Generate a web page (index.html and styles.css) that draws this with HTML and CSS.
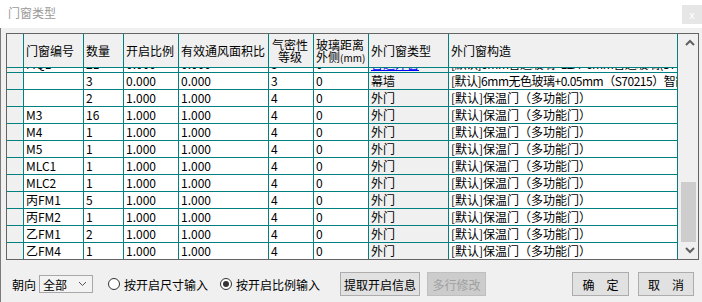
FILE: index.html
```html
<!DOCTYPE html>
<html>
<head>
<meta charset="utf-8">
<link rel="stylesheet" href="styles.css">
</head>
<body>
<div class="window">
  <div class="titlebar">
    <span class="title">门窗类型</span>
    <span class="close">x</span>
  </div>
  <div class="main">
    <div class="grid">
      <div class="table">
        <div class="row head">
          <div class="c c0"></div>
          <div class="c">门窗编号</div>
          <div class="c">数量</div>
          <div class="c">开启比例</div>
          <div class="c">有效通风面积比</div>
          <div class="c two center">气密性<br>等级</div>
          <div class="c two">玻璃距离<br>外侧<span class="mm">(mm)</span></div>
          <div class="c">外门窗类型</div>
          <div class="c">外门窗构造</div>
        </div>
        <div class="body">
          <div class="rows">
            <div class="row">
              <div class="c c0"></div><div class="c">MQ1</div><div class="c">21</div><div class="c">0.000</div><div class="c">0.000</div><div class="c">3</div><div class="c">0</div><div class="c c7"><span class="link">普通外窗</span></div><div class="c tight">[默认]6mm普通玻璃+12A+6mm普通玻璃(S70215)</div>
            </div>
            <div class="row">
              <div class="c c0"></div><div class="c"></div><div class="c">3</div><div class="c">0.000</div><div class="c">0.000</div><div class="c">3</div><div class="c">0</div><div class="c c7">幕墙</div><div class="c tight">[默认]6mm无色玻璃+0.05mm（S70215）智能玻璃</div>
            </div>
            <div class="row">
              <div class="c c0"></div><div class="c"></div><div class="c">2</div><div class="c">1.000</div><div class="c">1.000</div><div class="c">4</div><div class="c">0</div><div class="c c7">外门</div><div class="c">[默认]保温门（多功能门）</div>
            </div>
            <div class="row">
              <div class="c c0"></div><div class="c">M3</div><div class="c">16</div><div class="c">1.000</div><div class="c">1.000</div><div class="c">4</div><div class="c">0</div><div class="c c7">外门</div><div class="c">[默认]保温门（多功能门）</div>
            </div>
            <div class="row">
              <div class="c c0"></div><div class="c">M4</div><div class="c">1</div><div class="c">1.000</div><div class="c">1.000</div><div class="c">4</div><div class="c">0</div><div class="c c7">外门</div><div class="c">[默认]保温门（多功能门）</div>
            </div>
            <div class="row">
              <div class="c c0"></div><div class="c">M5</div><div class="c">1</div><div class="c">1.000</div><div class="c">1.000</div><div class="c">4</div><div class="c">0</div><div class="c c7">外门</div><div class="c">[默认]保温门（多功能门）</div>
            </div>
            <div class="row">
              <div class="c c0"></div><div class="c">MLC1</div><div class="c">1</div><div class="c">1.000</div><div class="c">1.000</div><div class="c">4</div><div class="c">0</div><div class="c c7">外门</div><div class="c">[默认]保温门（多功能门）</div>
            </div>
            <div class="row">
              <div class="c c0"></div><div class="c">MLC2</div><div class="c">1</div><div class="c">1.000</div><div class="c">1.000</div><div class="c">4</div><div class="c">0</div><div class="c c7">外门</div><div class="c">[默认]保温门（多功能门）</div>
            </div>
            <div class="row">
              <div class="c c0"></div><div class="c">丙FM1</div><div class="c">5</div><div class="c">1.000</div><div class="c">1.000</div><div class="c">4</div><div class="c">0</div><div class="c c7">外门</div><div class="c">[默认]保温门（多功能门）</div>
            </div>
            <div class="row">
              <div class="c c0"></div><div class="c">丙FM2</div><div class="c">1</div><div class="c">1.000</div><div class="c">1.000</div><div class="c">4</div><div class="c">0</div><div class="c c7">外门</div><div class="c">[默认]保温门（多功能门）</div>
            </div>
            <div class="row">
              <div class="c c0"></div><div class="c">乙FM1</div><div class="c">2</div><div class="c">1.000</div><div class="c">1.000</div><div class="c">4</div><div class="c">0</div><div class="c c7">外门</div><div class="c">[默认]保温门（多功能门）</div>
            </div>
            <div class="row">
              <div class="c c0"></div><div class="c">乙FM4</div><div class="c">1</div><div class="c">1.000</div><div class="c">1.000</div><div class="c">4</div><div class="c">0</div><div class="c c7">外门</div><div class="c">[默认]保温门（多功能门）</div>
            </div>
          </div>
        </div>
      </div>
      <div class="vscroll">
        <div class="arrow"><svg width="10" height="7" viewBox="0 0 10 7"><path d="M1 6 L5 2 L9 6" fill="none" stroke="#606060" stroke-width="2"/></svg></div>
        <div class="track"><div class="thumb"></div></div>
        <div class="arrow"><svg width="10" height="7" viewBox="0 0 10 7"><path d="M1 1 L5 5 L9 1" fill="none" stroke="#606060" stroke-width="2"/></svg></div>
      </div>
    </div>
    <div class="toolbar">
      <span class="label">朝向</span>
      <div class="select"><span>全部</span><svg width="9" height="6" viewBox="0 0 9 6"><path d="M1 1 L4.5 4.5 L8 1" fill="none" stroke="#555" stroke-width="1"/></svg></div>
      <label class="radio r1"><span class="dot"></span>按开启尺寸输入</label>
      <label class="radio r2"><span class="dot on"></span>按开启比例输入</label>
      <button class="btn b1">提取开启信息</button>
      <button class="btn b2 disabled">多行修改</button>
      <button class="btn ok"><span>确</span><span>定</span></button>
      <button class="btn cancel"><span>取</span><span>消</span></button>
    </div>
  </div>
</div>
</body>
</html>
```

FILE: styles.css
```css
* { box-sizing: border-box; }
html, body { margin: 0; padding: 0; }
body {
  width: 702px;
  height: 302px;
  overflow: hidden;
  background: #f0f0f0;
  font-family: "Noto Sans CJK SC", "Liberation Sans", sans-serif;
  font-size: 12px;
  color: #000;
}
.window { width: 702px; height: 302px; display: flex; flex-direction: column; }
.titlebar {
  height: 28px;
  background: #fff;
  display: flex;
  justify-content: space-between;
  align-items: flex-start;
}
.title { color: #9a9a9a; font-size: 12px; line-height: 14px; padding: 6px 0 0 8px; }
.close {
  width: 20px; height: 19px; margin-top: 5px;
  background: #e6e6e6; color: #fff;
  font-family: "Liberation Sans", sans-serif; font-size: 11px;
  display: flex; align-items: center; justify-content: center;
}
.main {
  flex: 1;
  border-left: 1px solid #7a7a7a;
  padding: 5px 0 0 5px;
  display: flex;
  flex-direction: column;
}
.grid {
  width: 693px;
  height: 227px;
  border: 1px solid #646464;
  display: flex;
  background: #f0f0f0;
}
.table { width: 671px; display: flex; flex-direction: column; }
.row {
  display: grid;
  grid-template-columns: 17px 60px 40px 55px 90px 45px 55px 80px 229px;
  height: 17px;
}
.c {
  border-right: 1px solid #008080;
  border-bottom: 1px solid #008080;
  background: #fff;
  padding: 0 2px;
  line-height: 16px;
  white-space: nowrap;
  overflow: hidden;
}
.c.tight { letter-spacing: -0.5px; }
.c0, .c7 { background: #f0f0f0; }
.head { height: 34px; }
.head .c {
  background: #f0f0f0;
  line-height: 33px;
  font-size: 12px;
}
.head .c.two { line-height: 11.5px; padding-top: 5px; }
.head .c.center { text-align: center; padding-right: 4px; }
.mm { font-size: 10px; }
.body { height: 191px; overflow: hidden; }
.rows { margin-top: -12px; }
.link { color: #0000ff; text-decoration: underline; }
.vscroll {
  width: 20px;
  display: flex;
  flex-direction: column;
  padding-left: 3px;
}
.arrow { height: 17px; display: flex; align-items: center; justify-content: center; }
.track { flex: 1; display: flex; flex-direction: column; justify-content: flex-end; }
.thumb { height: 60px; width: 15px; background: #cdcdcd; }
.toolbar {
  display: flex;
  align-items: center;
  height: 24px;
  margin-top: 12px;
  padding: 0 8px 0 6px;
}
.label { margin-right: 3px; }
.select {
  width: 54px; height: 18px;
  border: 1px solid #a8a8a8;
  background: #f3f3f3;
  display: flex; align-items: center; justify-content: space-between;
  padding: 0 5px 0 3px;
}
.radio { display: flex; align-items: center; }
.r1 { margin-left: 15px; }
.r2 { margin-left: 12px; }
.dot {
  width: 12px; height: 12px;
  border: 1px solid #333;
  border-radius: 50%;
  background: #fff;
  margin-right: 4px;
  display: flex; align-items: center; justify-content: center;
}
.dot.on::after {
  content: "";
  width: 6px; height: 6px;
  border-radius: 50%;
  background: #333;
}
.btn {
  height: 24px;
  border: 1px solid #adadad;
  background: #e1e1e1;
  font-family: inherit;
  font-size: 12px;
  color: #000;
  padding: 0;
  display: flex; align-items: center; justify-content: center;
}
.b1 { width: 80px; margin-left: 20px; }
.b2 { width: 59px; margin-left: 7px; }
.disabled { background: #cccccc; border-color: #bfbfbf; color: #a0a0a0; }
.ok { width: 57px; margin-left: auto; gap: 12px; }
.cancel { width: 56px; margin-left: 9px; gap: 12px; }
```
